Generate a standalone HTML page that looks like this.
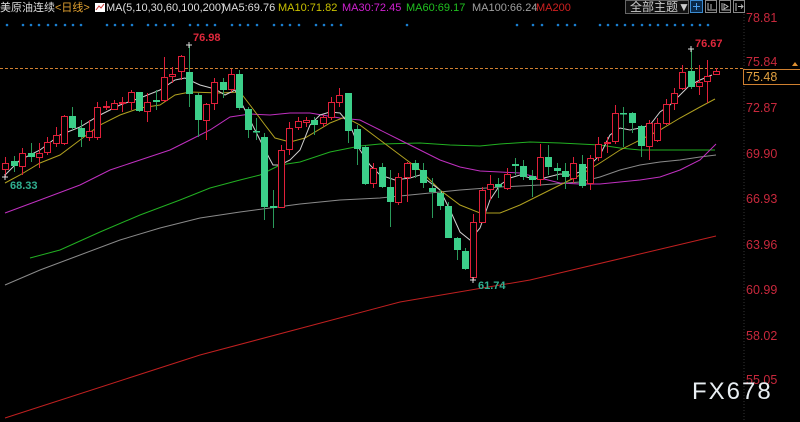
<!DOCTYPE html>
<html><head><meta charset="utf-8"><style>
body{margin:0;background:#000;width:800px;height:422px;overflow:hidden;position:relative;font-family:"Liberation Sans","Noto Sans CJK SC",sans-serif}
.t{position:absolute;top:1px;font-size:11px;line-height:14px;white-space:nowrap}
.ax{position:absolute;left:746px;font-size:12.5px;color:#c8283c;line-height:14px}
</style></head><body>
<svg width="800" height="422" style="position:absolute;left:0;top:0">
<g fill="#1a7fd0">
<circle cx="7" cy="25" r="1.3"/><circle cx="23" cy="25" r="1.3"/><circle cx="31" cy="25" r="1.3"/><circle cx="39" cy="25" r="1.3"/><circle cx="48" cy="25" r="1.3"/><circle cx="56" cy="25" r="1.3"/><circle cx="65" cy="25" r="1.3"/><circle cx="73" cy="25" r="1.3"/><circle cx="81" cy="25" r="1.3"/>
<circle cx="107" cy="25" r="1.3"/><circle cx="115" cy="25" r="1.3"/><circle cx="123" cy="25" r="1.3"/><circle cx="132" cy="25" r="1.3"/>
<circle cx="148" cy="25" r="1.3"/><circle cx="156" cy="25" r="1.3"/><circle cx="165" cy="25" r="1.3"/><circle cx="173" cy="25" r="1.3"/>
<circle cx="190" cy="25" r="1.3"/><circle cx="198" cy="25" r="1.3"/><circle cx="207" cy="25" r="1.3"/><circle cx="215" cy="25" r="1.3"/>
<circle cx="232" cy="25" r="1.3"/><circle cx="240" cy="25" r="1.3"/><circle cx="248" cy="25" r="1.3"/><circle cx="257" cy="25" r="1.3"/>
<circle cx="274" cy="25" r="1.3"/><circle cx="282" cy="25" r="1.3"/><circle cx="290" cy="25" r="1.3"/><circle cx="299" cy="25" r="1.3"/>
<circle cx="316" cy="25" r="1.3"/><circle cx="324" cy="25" r="1.3"/><circle cx="332" cy="25" r="1.3"/><circle cx="341" cy="25" r="1.3"/>
<circle cx="407" cy="25" r="1.3"/><circle cx="517" cy="25" r="1.3"/><circle cx="533" cy="25" r="1.3"/><circle cx="542" cy="25" r="1.3"/><circle cx="558" cy="25" r="1.3"/><circle cx="567" cy="25" r="1.3"/><circle cx="575" cy="25" r="1.3"/>
<circle cx="600" cy="25" r="1.3"/><circle cx="608" cy="25" r="1.3"/><circle cx="617" cy="25" r="1.3"/><circle cx="625" cy="25" r="1.3"/><circle cx="633" cy="25" r="1.3"/><circle cx="642" cy="25" r="1.3"/><circle cx="650" cy="25" r="1.3"/><circle cx="658" cy="25" r="1.3"/><circle cx="667" cy="25" r="1.3"/><circle cx="675" cy="25" r="1.3"/><circle cx="683" cy="25" r="1.3"/><circle cx="692" cy="25" r="1.3"/><circle cx="700" cy="25" r="1.3"/><circle cx="708" cy="25" r="1.3"/>
</g>
<line x1="744" y1="14" x2="744" y2="422" stroke="#333" stroke-dasharray="1 2"/>
<line x1="0" y1="68.5" x2="745" y2="68.5" stroke="#d08030" stroke-dasharray="3 2"/>
<g fill="none" stroke-width="1">
<polyline stroke="#c02020" points="5,418 200,355 400,302 530,280 716,236"/>
<polyline stroke="#8a8a8a" points="5,285 40,270 80,255 120,240 160,228 200,218 240,212 270,208 300,204 340,200 380,198 420,194 460,190 500,187 540,185 580,182 600,177 620,170 640,165 660,162 680,160 700,157 716,155"/>
<polyline stroke="#22b022" points="30,258 60,250 100,232 140,215 180,200 210,188 240,180 260,175 280,165 300,162 330,152 360,146 380,144 420,143 450,145 480,146 500,144 530,142 560,143 600,145 620,148 640,150 660,150 690,150 715,150"/>
<polyline stroke="#c030c0" points="5,213 40,200 80,185 110,170 140,160 170,150 190,140 210,130 230,117 250,114 270,115 290,113 310,113 340,118 360,120 380,130 400,140 420,150 440,160 460,167 480,171 500,172 520,173 540,178 560,183 580,184 600,184 620,182 640,180 660,177 680,170 700,160 716,144"/>
<polyline stroke="#b0a020" points="5,183 20,175 40,163 60,155 80,140 100,125 120,115 140,108 160,105 175,95 190,92 220,93 240,92 250,105 265,125 275,138 290,142 305,138 330,123 345,117 360,125 380,140 400,155 420,170 440,190 460,205 480,213 500,213 520,205 540,195 560,185 580,175 600,163 620,150 640,140 660,130 680,118 700,107 715,99"/>
<polyline stroke="#d0d0d0" points="5,175 20,160 40,150 60,135 80,127 100,115 120,105 140,98 160,90 175,80 185,78 200,85 215,89 225,95 235,90 245,110 255,130 265,150 273,165 280,165 290,160 300,150 310,125 320,115 330,112 340,113 350,125 360,150 370,165 380,175 395,180 410,178 420,175 440,190 450,210 460,232 470,240 480,228 490,200 500,185 510,178 520,175 530,178 540,179 560,174 570,175 580,172 590,165 600,155 610,135 620,128 630,130 640,128 650,125 660,112 670,105 680,95 690,85 700,80 712,75"/>
</g>
<g id="cd"></g>
<g stroke="#ddd"><path d="M186 45h6M189 42v6M2 177h6M5 174v6M470 280h6M473 277v6M688 49h6M691 46v6"/></g>
<rect x="743.5" y="69.5" width="60" height="15" fill="#000" stroke="#d08030"/>
<path d="M792 66l3-4 3 4z" fill="#e09030"/>
<rect x="625.5" y="0.5" width="63" height="13" fill="#111" stroke="#666"/>
<rect x="690.5" y="0.5" width="12" height="12" fill="#0a2a4a" stroke="#3a8ad0"/>
<path d="M696.5 3v7M693 6.5h7" stroke="#4aa0f0"/>
<rect x="705.5" y="0.5" width="11" height="12" fill="none" stroke="#888"/>
<rect x="719.5" y="0.5" width="11" height="12" fill="none" stroke="#888"/>
<rect x="733.5" y="0.5" width="11" height="12" fill="none" stroke="#888"/>
<path d="M708 3v7h8M711 4v5M722 3v7h8M724 4l4 2.5-4 2.5zM736 3v8M738 6.5h5M741 4.5l2 2-2 2" stroke="#bbb" fill="none"/>
<rect x="95" y="3" width="10" height="9" fill="#fff"/><path d="M96 10l3-4 2 2 3-4" stroke="#c33" fill="none"/>
</svg>
<script>
var d=`R 5 163 169 157 177|G 14 161 166 156 172|R 22 153 166 148 175|G 31 153 157 143 162|R 39 153 157 143 168|R 47 142 152 137 155|R 56 135 143 127 147|R 64 116 143 115 145|G 72 116 128 107 130|G 81 128 137 120 147|R 89 131 137 120 141|R 97 107 137 102 140|R 106 106 107 101 110|R 114 103 109 100 110|R 122 102 103 97 112|R 131 92 102 90 110|G 139 92 111 92 112|R 147 102 111 93 122|G 156 100 102 90 110|R 164 77 100 57 102|R 172 74 76 67 83|R 181 56 71 55 80|G 189 72 94 45 107|G 198 95 120 93 137|R 206 104 120 103 140|R 214 82 103 78 110|G 223 82 90 78 98|R 231 74 89 69 92|G 239 74 108 70 110|G 248 109 130 107 138|G 256 131 132 118 140|G 264 137 207 133 220|G 273 206 208 190 228|R 281 150 207 145 208|R 289 128 149 122 155|R 298 121 127 117 130|R 306 120 122 117 127|G 314 120 125 117 135|R 323 117 123 115 127|R 331 102 117 97 120|R 339 95 102 88 107|G 348 93 131 93 143|G 357 129 149 125 165|G 365 147 184 145 185|R 373 168 183 163 188|G 382 167 187 163 188|G 390 187 202 170 227|R 398 177 202 173 205|R 407 163 177 162 202|G 415 163 170 160 178|G 423 170 183 163 188|G 432 188 192 178 218|G 440 193 206 190 210|G 448 206 238 202 238|G 457 238 250 237 260|G 465 251 269 248 270|R 473 222 277 214 280|R 482 190 222 187 223|R 490 184 189 175 200|G 498 184 187 178 198|R 507 174 188 168 190|G 515 164 166 158 175|G 523 166 177 160 180|G 532 176 180 170 197|R 540 157 179 144 186|G 548 157 167 145 175|G 557 168 171 163 180|G 565 171 177 163 189|R 573 163 178 157 183|G 582 164 186 155 188|R 590 158 183 155 190|R 598 144 157 137 161|R 607 142 143 137 153|R 615 113 141 105 144|G 623 113 114 107 147|G 632 113 123 112 133|G 641 126 146 125 157|R 649 123 146 120 160|R 657 123 140 118 142|R 666 104 123 99 125|R 674 93 103 88 110|R 682 72 88 65 90|G 691 71 87 49 89|R 699 82 86 65 95|R 707 76 81 60 103|R 716 71 74 68 75`;
var s='';d.split('|').forEach(function(r){var a=r.split(' '),c=+a[1],t=+a[2],b=+a[3],h=+a[4],l=+a[5];
if(a[0]=='R'){s+='<line x1="'+(c+.5)+'" x2="'+(c+.5)+'" y1="'+h+'" y2="'+l+'" stroke="#e0203a"/><rect x="'+(c-2.5)+'" y="'+(t+.5)+'" width="6" height="'+Math.max(b-t,1)+'" fill="#000" stroke="#e0203a"/>';}
else{s+='<line x1="'+(c+.5)+'" x2="'+(c+.5)+'" y1="'+h+'" y2="'+l+'" stroke="#2a9a5a"/><rect x="'+(c-3)+'" y="'+t+'" width="7" height="'+Math.max(b-t,1.5)+'" fill="#3ccf8a"/>';}});
document.getElementById('cd').innerHTML=s;
</script>
<div class="t" style="left:0px;color:#ddd">美原油连续</div>
<div class="t" style="left:55px;color:#e0a030">&lt;日线&gt;</div>
<div class="t" style="left:106px;color:#ddd">MA(5,10,30,60,100,200)</div>
<div class="t" style="left:222px;color:#ddd">MA5:69.76</div>
<div class="t" style="left:278px;color:#c8c000">MA10:71.82</div>
<div class="t" style="left:342px;color:#d020d0">MA30:72.45</div>
<div class="t" style="left:406px;color:#20c020">MA60:69.17</div>
<div class="t" style="left:472px;color:#a0a0a0">MA100:66.24</div>
<div class="t" style="left:536px;color:#d02020">MA200</div>
<div class="t" style="left:630px;top:0;color:#ccc;font-size:12px">全部主题▼</div>
<div class="ax" style="top:11px">78.81</div>
<div class="ax" style="top:55px">75.84</div>
<div class="ax" style="top:70px;color:#e0a040">75.48</div>
<div class="ax" style="top:101px">72.87</div>
<div class="ax" style="top:147px">69.90</div>
<div class="ax" style="top:192px">66.93</div>
<div class="ax" style="top:238px">63.96</div>
<div class="ax" style="top:283px">60.99</div>
<div class="ax" style="top:329px">58.02</div>
<div class="ax" style="top:373px">55.05</div>
<div style="position:absolute;left:193px;top:32px;color:#e0283c;font-size:11px;font-weight:bold">76.98</div>
<div style="position:absolute;left:695px;top:38px;color:#e0283c;font-size:11px;font-weight:bold">76.67</div>
<div style="position:absolute;left:10px;top:180px;color:#30b090;font-size:11px;font-weight:bold">68.33</div>
<div style="position:absolute;left:478px;top:280px;color:#30b090;font-size:11px;font-weight:bold">61.74</div>
<div style="position:absolute;left:692px;top:378px;color:#e8eef2;font-size:24px;letter-spacing:2px;line-height:28px">FX678</div>
</body></html>
